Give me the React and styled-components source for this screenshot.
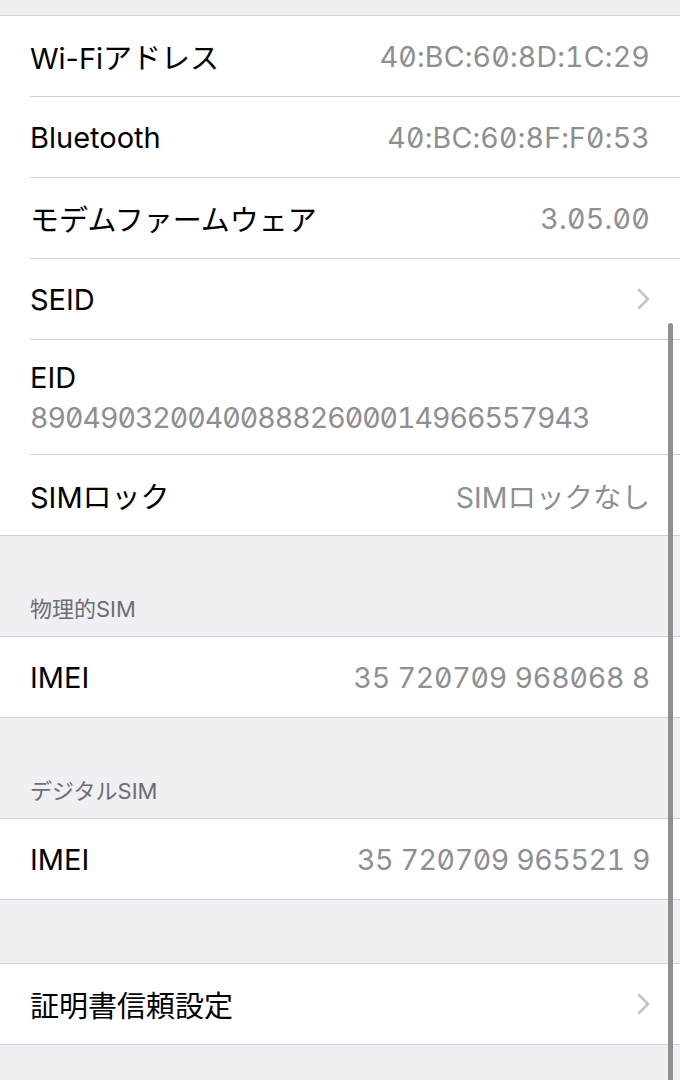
import React from "react";
import styled, { createGlobalStyle } from "styled-components";

const GlobalStyle = createGlobalStyle`
  html, body { margin: 0; padding: 0; }
  body {
    background: #efeff4;
    font-family: Inter, "Noto Sans CJK JP", "Noto Sans", sans-serif;
    -webkit-font-smoothing: antialiased;
  }
`;

const Page = styled.div`
  position: relative;
  min-height: 1080px;
  background: #efeff4;
  padding-top: 15px;
  box-sizing: border-box;
  overflow: hidden;
`;

const Group = styled.div`
  background: #fff;
  border-top: 1px solid #d1d1d6;
  border-bottom: 1px solid #d1d1d6;
`;

const Row = styled.div`
  display: flex;
  padding-left: 30px;
  &:last-child > div { border-bottom: none; }
`;

const RowInner = styled.div`
  flex: 1;
  display: flex;
  flex-direction: ${(p) => (p.$stacked ? "column" : "row")};
  align-items: ${(p) => (p.$stacked ? "flex-start" : "center")};
  justify-content: ${(p) => (p.$stacked ? "center" : "space-between")};
  height: ${(p) => (p.$stacked ? 114 : 80)}px;
  padding-right: 30px;
  border-bottom: 1px solid #d1d1d6;
  gap: ${(p) => (p.$stacked ? "5px" : "0")};
`;

const Label = styled.span`
  font-size: 29px;
  color: #000;
`;

const Value = styled.span`
  font-size: 28.5px;
  color: #8e8e93;
  font-feature-settings: "tnum" 1, "zero" 1;
  letter-spacing: ${(p) => p.$ls || 0}px;
`;

const Header = styled.div`
  height: 100px;
  display: flex;
  align-items: flex-end;
  padding: 0 30px 13px;
  box-sizing: border-box;
  font-size: 22px;
  color: #6d6d72;
`;

const Spacer = styled.div`
  height: ${(p) => p.$h}px;
`;

const ScrollBar = styled.div`
  position: absolute;
  right: 7px;
  top: 323px;
  bottom: -10px;
  width: 5px;
  border-radius: 3px;
  background: #8f8f94;
`;

const Chevron = () => (
  <svg width="13" height="22" viewBox="0 0 13 22" fill="none">
    <polyline points="2,2 11,11 2,20" stroke="#c4c4c9" strokeWidth="2.6" strokeLinecap="round" strokeLinejoin="round" />
  </svg>
);

const Item = ({ label, value, chevron, ls }) => (
  <Row>
    <RowInner>
      <Label>{label}</Label>
      {chevron ? <Chevron /> : <Value $ls={ls}>{value}</Value>}
    </RowInner>
  </Row>
);

export default function App() {
  return (
    <>
      <GlobalStyle />
      <Page>
        <Group>
          <Item label="Wi-Fiアドレス" value="40:BC:60:8D:1C:29" ls={0.2} />
          <Item label="Bluetooth" value="40:BC:60:8F:F0:53" ls={0.2} />
          <Item label="モデムファームウェア" value="3.05.00" ls={0.3} />
          <Item label="SEID" chevron />
          <Row>
            <RowInner $stacked>
              <Label>EID</Label>
              <Value $ls={-1}>89049032004008882600014966557943</Value>
            </RowInner>
          </Row>
          <Item label="SIMロック" value="SIMロックなし" />
        </Group>
        <Header>物理的SIM</Header>
        <Group>
          <Item label="IMEI" value="35 720709 968068 8" ls={-0.2} />
        </Group>
        <Header>デジタルSIM</Header>
        <Group>
          <Item label="IMEI" value="35 720709 965521 9" ls={-0.4} />
        </Group>
        <Spacer $h={63} />
        <Group>
          <Item label="証明書信頼設定" chevron />
        </Group>
        <ScrollBar />
      </Page>
    </>
  );
}
